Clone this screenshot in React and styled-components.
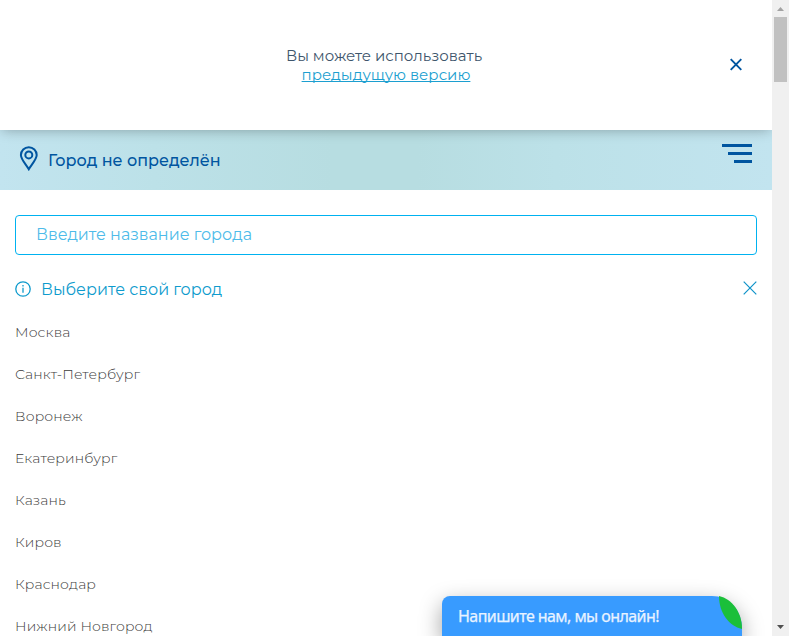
import React from "react";
import styled, { createGlobalStyle } from "styled-components";

const Global = createGlobalStyle`
  * { box-sizing: border-box; }
  body { margin: 0; background: #fff; overflow: hidden; font-family: Montserrat, Inter, sans-serif; }
`;

const Screen = styled.div`
  position: relative;
  display: flex;
  width: 789px;
  height: 636px;
  overflow: hidden;
`;

const Page = styled.main`
  width: 772px;
  height: 636px;
  overflow: hidden;
`;

const Notice = styled.section`
  position: relative;
  z-index: 1;
  display: grid;
  grid-template-columns: 72px 1fr 72px;
  align-items: center;
  height: 130px;
  background: #fff;
  box-shadow: 0 2px 12px -2px rgba(0, 0, 0, 0.3);
`;

const NoticeText = styled.p`
  grid-column: 2;
  display: flex;
  flex-direction: column;
  align-items: center;
  margin: 0;
  color: #3e566c;
  font-size: 15px;
  line-height: 19px;
`;

const Line = styled.span`
  white-space: nowrap;
`;

const NoticeLine = styled(Line)`
  padding-right: 4px;
`;

const NoticeLink = styled.a`
  color: #1c9fd0;
  white-space: nowrap;
  text-decoration: underline;
  text-decoration-skip-ink: none;
  text-decoration-thickness: 1px;
  text-underline-offset: 1px;
`;

const IconButton = styled.button`
  display: flex;
  padding: 0 0 ${(p) => p.$lift || 0}px;
  border: 0;
  background: none;
  justify-self: center;
`;

const Header = styled.header`
  display: flex;
  justify-content: space-between;
  height: 60px;
  padding: 14px 20px 0 19px;
  background: linear-gradient(90deg, #c2e4ef 0%, #bce1e8 20%, #b7dde1 43%, #b7dde1 54%, #bce1e8 72%, #c2e4ef 100%);
`;

const Location = styled.div`
  display: flex;
  gap: 10px;
  height: 32px;
  color: #0055a0;
  font-size: 16px;
  font-weight: 500;
  line-height: 34px;
`;

const PinIcon = styled.svg`
  margin-top: 2px;
`;

const Menu = styled.button`
  display: flex;
  flex-direction: column;
  align-items: flex-end;
  gap: 5px;
  width: 30px;
  height: 19px;
  padding: 0;
  border: 0;
  background: none;
`;

const MenuBar = styled.span`
  width: ${(p) => p.$width}px;
  height: 3px;
  background: #0055a0;
`;

const Picker = styled.section`
  padding: 25px 15px 0;
`;

const SearchInput = styled.input`
  display: block;
  width: 742px;
  height: 40px;
  padding: 0 20px 1px;
  border: 1px solid #00b2f0;
  border-radius: 4px;
  outline: 0;
  background: #fff;
  font: 400 16px Montserrat, Inter, sans-serif;

  &::placeholder {
    color: #4dbbe9;
    opacity: 1;
  }
`;

const PickerTitle = styled.div`
  display: flex;
  align-items: center;
  height: 20px;
  margin-top: 24px;
  color: #0e9bcd;
  font-size: 16px;
  line-height: 20px;
`;

const TitleText = styled.h2`
  flex: 1;
  margin: 2px 0 0 10px;
  font: inherit;
`;

const CityList = styled.ul`
  margin: 12px 0 0;
  padding: 0;
  list-style: none;
`;

const City = styled.li`
  height: 42px;
  color: #3c3c3c;
  font-size: 14px;
  font-weight: 300;
  line-height: 42px;
  letter-spacing: 0.14px;
  white-space: nowrap;
`;

const Chat = styled.aside`
  position: absolute;
  left: 442px;
  bottom: 0;
  z-index: 2;
  display: flex;
  width: 300px;
  height: 40px;
  padding-left: 16px;
  border-radius: 8px 30px 0 0 / 8px 32px 0 0;
  background: #389bff;
  box-shadow: 0 8px 22px rgba(0, 0, 0, 0.38);
  color: #e9f3ff;
  font: 400 16px/41px "Noto Sans", sans-serif;
  letter-spacing: -0.57px;
  -webkit-text-stroke: 0.25px #e9f3ff;
  white-space: nowrap;
`;

const ChatLeaf = styled.svg`
  position: absolute;
  top: 0;
  right: 0;
`;

const Scrollbar = styled.div`
  display: flex;
  flex-direction: column;
  align-items: center;
  justify-content: space-between;
  width: 17px;
  background: #f0f0f0;
`;

const Thumb = styled.div`
  width: 13px;
  height: 65px;
  margin-bottom: auto;
  background: #c1c1c1;
`;

const cities = [
  "Москва",
  "Санкт-Петербург",
  "Воронеж",
  "Екатеринбург",
  "Казань",
  "Киров",
  "Краснодар",
  "Нижний Новгород",
];

export default function App() {
  return (
    <>
      <Global />
      <Screen>
        <Page>
          <Notice>
            <NoticeText>
              <NoticeLine>Вы можете использовать</NoticeLine>
              <NoticeLink>предыдущую версию</NoticeLink>
            </NoticeText>
            <IconButton $lift={1} aria-label="Закрыть">
              <svg width="12" height="13" viewBox="0 0 12 13">
                <path d="M.7 1.2 11.3 11.8M11.3 1.2.7 11.8" stroke="#0055a0" strokeWidth="1.9" />
              </svg>
            </IconButton>
          </Notice>
          <Header>
            <Location>
              <PinIcon width="19" height="25" viewBox="0 0 19 25" fill="none" stroke="#0055a0" strokeWidth="2">
                <path d="M9.8 23.3C7 18.5 1.9 13.4 1.9 9.1a7.9 7.9 0 0 1 15.8 0c0 4.3-5.1 9.4-7.9 14.2Z" />
                <circle cx="9.8" cy="8.9" r="3.5" />
              </PinIcon>
              <Line>Город не определён</Line>
            </Location>
            <Menu aria-label="Меню">
              <MenuBar $width={30} />
              <MenuBar $width={24} />
              <MenuBar $width={18} />
            </Menu>
          </Header>
          <Picker>
            <SearchInput placeholder="Введите название города" />
            <PickerTitle>
              <svg width="16" height="16" viewBox="0 0 16 16" fill="none" stroke="currentColor" strokeWidth="1.3">
                <circle cx="8" cy="8" r="7.2" />
                <path d="M8 6.8v5M8 4v1.4" />
              </svg>
              <TitleText>
                <Line>Выберите свой город</Line>
              </TitleText>
              <IconButton $lift={2} aria-label="Закрыть список">
                <svg width="14" height="14" viewBox="0 0 14 14">
                  <path d="M.7.7 13.3 13.3M13.3.7.7 13.3" stroke="#0e93c9" strokeWidth="1.2" />
                </svg>
              </IconButton>
            </PickerTitle>
            <CityList>
              {cities.map((name) => (
                <City key={name}>{name}</City>
              ))}
            </CityList>
          </Picker>
        </Page>
        <Scrollbar>
          <svg width="17" height="17" viewBox="0 0 17 17">
            <path d="M5 11h7L8.5 7Z" fill="#a3a3a3" />
          </svg>
          <Thumb />
          <svg width="17" height="17" viewBox="0 0 17 17">
            <path d="M5 6h7L8.5 10Z" fill="#505050" />
          </svg>
        </Scrollbar>
        <Chat>
          Напишите нам, мы онлайн!
          <ChatLeaf width="23" height="33" viewBox="0 0 23 33">
            <path d="M0 0C13 3 23 16 23 33C10 30 0 17 0 0Z" fill="#1bbf3a" />
          </ChatLeaf>
        </Chat>
      </Screen>
    </>
  );
}
